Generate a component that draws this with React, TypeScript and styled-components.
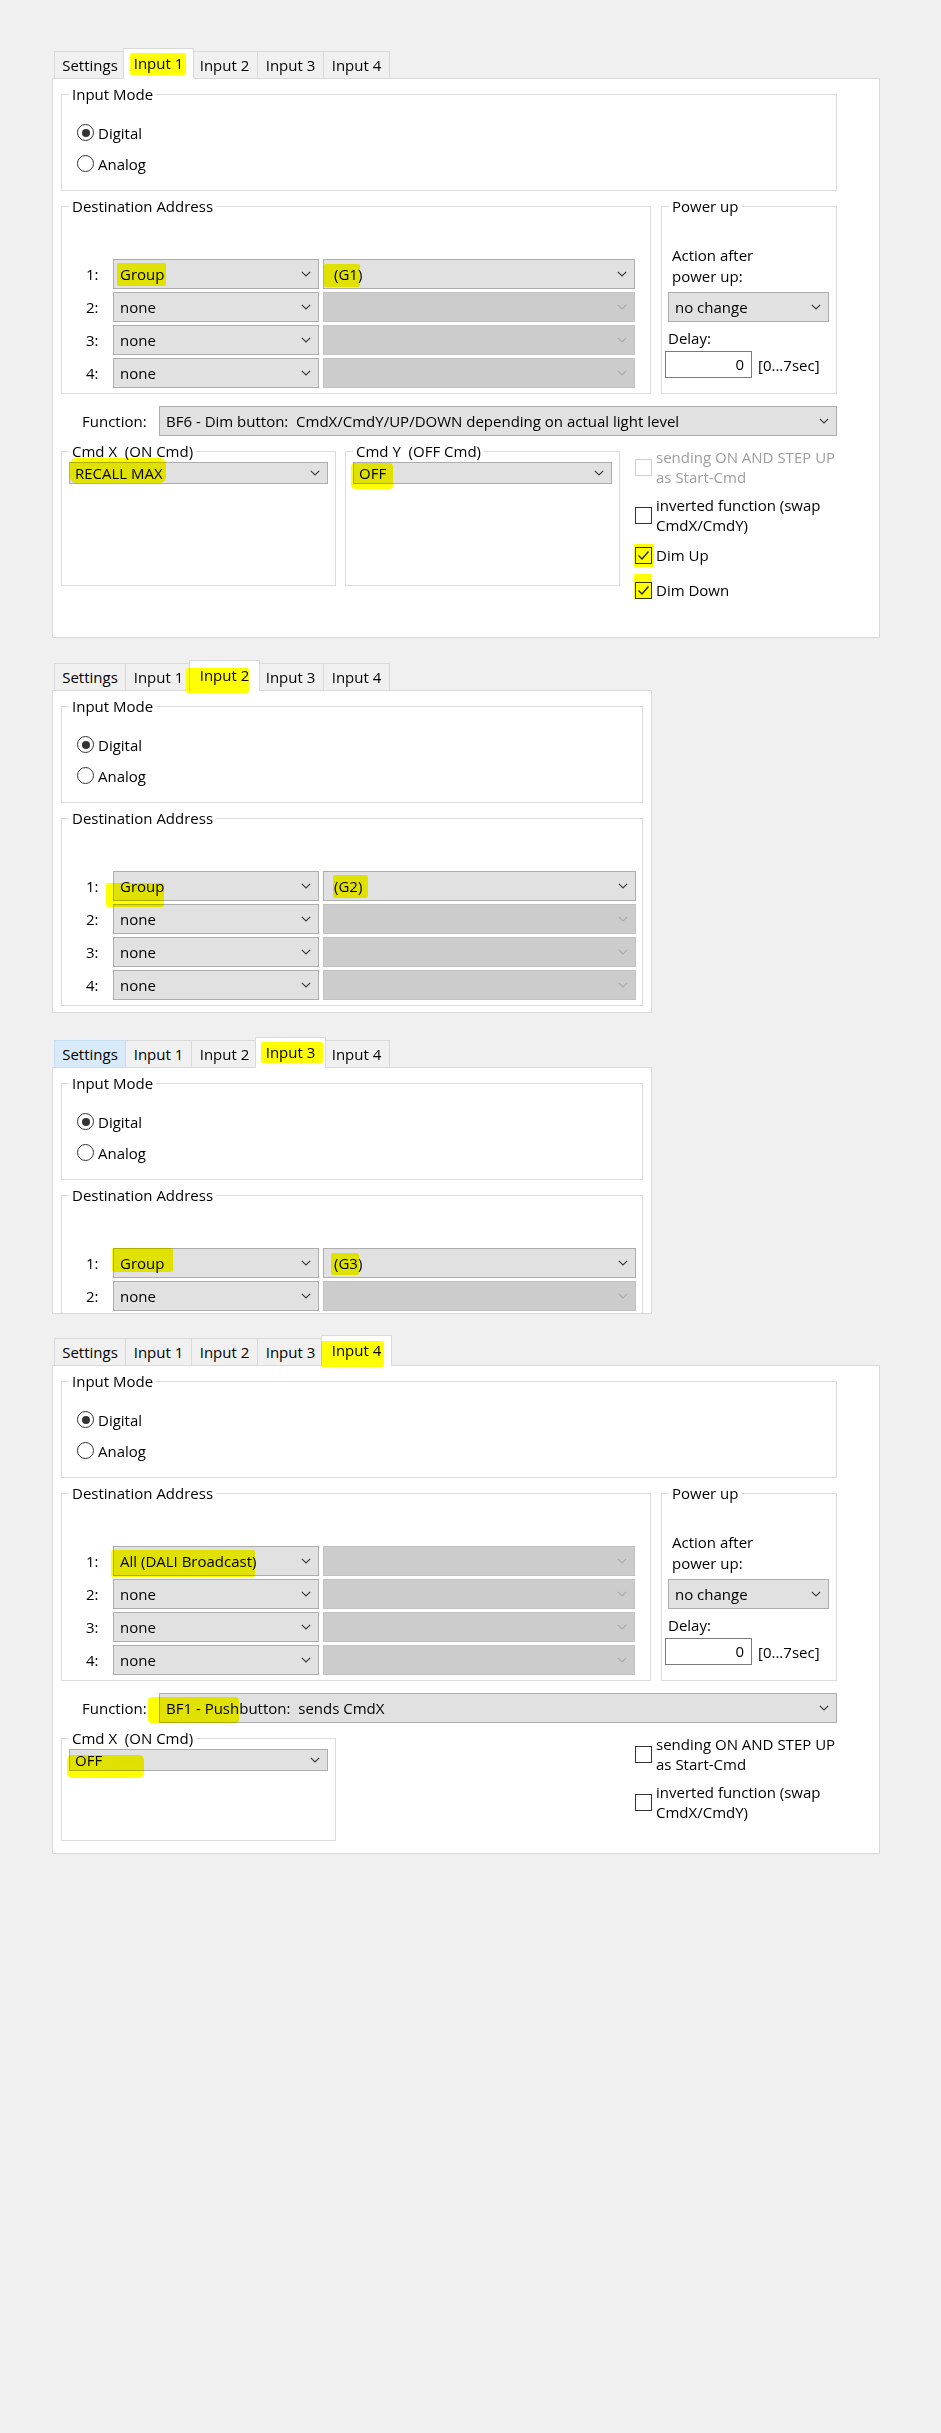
import { createGlobalStyle, styled } from "styled-components";
import type { ReactNode } from "react";

type Box = { t: number; r: number; b: number; l: number; rad?: number };

const GlobalStyle = createGlobalStyle`
  html, body {
    margin: 0;
    padding: 0;
    background: #f0f0f0;
  }
  body {
    font-family: "Open Sans", "Noto Sans", "Liberation Sans", sans-serif;
    font-size: 15px;
    color: #000;
  }
  #root {
    min-height: 2433px;
  }
`;

const Page = styled.main`
  display: flex;
  flex-direction: column;
  align-items: flex-start;
  padding: 48px 0 0 52px;
`;

const Shot = styled.section<{ $after: number }>`
  display: flex;
  flex-direction: column;
  margin-bottom: ${(p) => p.$after}px;
`;

const TabStrip = styled.div`
  display: flex;
  align-items: flex-end;
  height: 30px;
  padding-left: 2px;
`;

const Tab = styled.div<{ $w: number; $active?: boolean; $hover?: boolean }>`
  position: relative;
  box-sizing: border-box;
  display: flex;
  align-items: center;
  justify-content: center;
  width: ${(p) => p.$w + (p.$active ? 4 : 0)}px;
  height: ${(p) => (p.$active ? 31 : 27)}px;
  margin: 0 ${(p) => (p.$active ? -2 : 0)}px ${(p) => (p.$active ? -1 : 0)}px
    ${(p) => (p.$active ? -3 : -1)}px;
  padding-bottom: ${(p) => (p.$active ? 3 : 0)}px;
  border: 1px solid ${(p) => (p.$hover ? "#c4ddf3" : "#d9d9d9")};
  border-bottom: none;
  background: ${(p) => (p.$active ? "#fff" : p.$hover ? "#d8eaf9" : "#f0f0f0")};
  z-index: ${(p) => (p.$active ? 2 : p.$hover ? 1 : 0)};
  line-height: 20px;
  &:first-child {
    margin-left: 0;
  }
`;

const Panel = styled.div<{ $w: number; $h: number }>`
  box-sizing: border-box;
  width: ${(p) => p.$w}px;
  height: ${(p) => p.$h}px;
  border: 1px solid #d9d9d9;
  background: #fff;
  overflow: hidden;
  padding: 5px 0 0 8px;
`;

const Body = styled.div<{ $w: number }>`
  width: ${(p) => p.$w}px;
  display: flex;
  flex-direction: column;
`;

const Group = styled.fieldset<{ $w?: number; $h?: number; $mt?: number }>`
  box-sizing: border-box;
  margin: ${(p) => p.$mt ?? 0}px 0 0 0;
  padding: 0;
  min-width: 0;
  width: ${(p) => (p.$w ? `${p.$w}px` : "auto")};
  ${(p) => (p.$h ? `height: ${p.$h}px;` : "")}
  border: 1px solid #dcdcdc;
`;

const Legend = styled.legend`
  margin-left: 7px;
  padding: 0 3px;
  line-height: 20px;
  white-space: pre;
`;

const Stack = styled.div<{ $pt: number; $pb?: number; $pl?: number; $pr?: number; $gap?: number }>`
  display: flex;
  flex-direction: column;
  gap: ${(p) => p.$gap ?? 0}px;
  padding: ${(p) => p.$pt}px ${(p) => p.$pr ?? 0}px ${(p) => p.$pb ?? 0}px ${(p) => p.$pl ?? 0}px;
`;

const Mark = styled.span<{ $t: number; $r: number; $b: number; $l: number; $rad?: number }>`
  position: relative;
  display: inline-block;
  line-height: 20px;
  &::after {
    content: "";
    position: absolute;
    top: ${(p) => -p.$t}px;
    right: ${(p) => -p.$r}px;
    bottom: ${(p) => -p.$b}px;
    left: ${(p) => -p.$l}px;
    background: #ffff00;
    mix-blend-mode: multiply;
    border-radius: ${(p) => p.$rad ?? 2}px;
    pointer-events: none;
  }
`;

const RadioRow = styled.div`
  display: flex;
  align-items: center;
  gap: 4px;
  height: 31px;
  line-height: 20px;
`;

const Radio = styled.span<{ $on?: boolean }>`
  box-sizing: border-box;
  width: 17px;
  height: 17px;
  border-radius: 50%;
  border: 1px solid #333;
  background: #fff;
  display: flex;
  align-items: center;
  justify-content: center;
  &::after {
    content: "";
    width: 8px;
    height: 8px;
    border-radius: 50%;
    background: ${(p) => (p.$on ? "#333" : "transparent")};
  }
`;

const AddrRow = styled.div`
  display: flex;
  align-items: center;
`;

const RowLabel = styled.span`
  flex: none;
  width: 27px;
  line-height: 20px;
`;

const Combo = styled.div<{ $w?: number; $off?: boolean; $pl?: number; $ml?: number; $mt?: number }>`
  box-sizing: border-box;
  display: flex;
  align-items: center;
  height: 30px;
  ${(p) => (p.$w ? `width: ${p.$w}px; flex: none;` : "flex: 1; min-width: 0;")}
  margin: ${(p) => p.$mt ?? 0}px 0 0 ${(p) => p.$ml ?? 0}px;
  padding: 0 7px 0 ${(p) => p.$pl ?? 6}px;
  border: 1px solid ${(p) => (p.$off ? "#c2c2c2" : "#adadad")};
  background: ${(p) => (p.$off ? "#cccccc" : "#e1e1e1")};
  color: #000;
`;

const Value = styled.span`
  flex: 1;
  min-width: 0;
  white-space: pre;
  line-height: 20px;
`;

const TopRow = styled.div`
  display: flex;
  gap: 10px;
  margin-top: 5px;
`;

const PowerText = styled.div`
  padding-left: 4px;
  line-height: 21px;
`;

const DelayLabel = styled.div`
  margin-top: 6px;
  line-height: 20px;
`;

const DelayRow = styled.div`
  display: flex;
  align-items: center;
  margin: 3px 0 0 -3px;
`;

const DelayInput = styled.div`
  box-sizing: border-box;
  width: 87px;
  height: 27px;
  border: 1px solid #7a7a7a;
  background: #fff;
  padding-right: 7px;
  text-align: right;
  line-height: 25px;
`;

const Range = styled.span`
  margin-left: 6px;
  line-height: 20px;
`;

const FunctionRow = styled.div`
  display: flex;
  align-items: center;
  margin-top: 12px;
`;

const FnLabel = styled.span`
  flex: none;
  width: 77px;
  padding-left: 21px;
  line-height: 20px;
`;

const CmdRow = styled.div`
  display: grid;
  grid-template-columns: 275px 275px 1fr;
  column-gap: 9px;
  align-items: start;
  margin-top: 5px;
`;

const Checks = styled.div`
  grid-column: 3;
  display: flex;
  flex-direction: column;
  margin: 6px 0 0 6px;
`;

const CheckItem = styled.div<{ $mt?: number; $off?: boolean }>`
  display: flex;
  align-items: center;
  margin-top: ${(p) => p.$mt ?? 0}px;
  color: ${(p) => (p.$off ? "#9d9d9d" : "#000")};
`;

const CheckBox = styled.span<{ $off?: boolean }>`
  box-sizing: border-box;
  flex: none;
  display: flex;
  width: 17px;
  height: 17px;
  border: 1px solid ${(p) => (p.$off ? "#cfcfcf" : "#333")};
  background: #fff;
`;

const CheckText = styled.span`
  margin-left: 4px;
  line-height: 20px;
  white-space: nowrap;
`;

const TAB_NAMES = ["Settings", "Input 1", "Input 2", "Input 3", "Input 4"];

function Marked({ m, children }: { m?: Box; children: ReactNode }) {
  if (!m) return <>{children}</>;
  return (
    <Mark $t={m.t} $r={m.r} $b={m.b} $l={m.l} $rad={m.rad}>
      {children}
    </Mark>
  );
}

function Tabs({ active, hover, mark }: { active: number; hover?: number; mark: Box }) {
  return (
    <TabStrip>
      {TAB_NAMES.map((name, i) => (
        <Tab key={name} $w={i === 0 ? 72 : 67} $active={i === active} $hover={i === hover}>
          {i === active ? <Marked m={mark}>{name}</Marked> : name}
        </Tab>
      ))}
    </TabStrip>
  );
}

function Chevron({ off }: { off?: boolean }) {
  return (
    <svg width="10" height="6" viewBox="0 0 10 6" fill="none">
      <polyline
        points="0.8,0.8 5,5 9.2,0.8"
        stroke={off ? "#a9a9a9" : "#3c3c3c"}
        strokeWidth="1.2"
      />
    </svg>
  );
}

function Select({
  children,
  w,
  off,
  pl,
  ml,
  mt,
}: {
  children?: ReactNode;
  w?: number;
  off?: boolean;
  pl?: number;
  ml?: number;
  mt?: number;
}) {
  return (
    <Combo $w={w} $off={off} $pl={pl} $ml={ml} $mt={mt}>
      <Value>{children}</Value>
      <Chevron off={off} />
    </Combo>
  );
}

function Tick() {
  return (
    <svg width="15" height="15" viewBox="0 0 15 15" fill="none">
      <polyline points="2.5,7.5 6,11 12.5,3.5" stroke="#222" strokeWidth="1.4" />
    </svg>
  );
}

function Check({
  lines,
  checked,
  off,
  mt,
  mark,
}: {
  lines: string[];
  checked?: boolean;
  off?: boolean;
  mt?: number;
  mark?: Box;
}) {
  const box = <CheckBox $off={off}>{checked ? <Tick /> : null}</CheckBox>;
  return (
    <CheckItem $mt={mt} $off={off}>
      {mark ? (
        <Mark $t={mark.t} $r={mark.r} $b={mark.b} $l={mark.l} $rad={1}>
          {box}
        </Mark>
      ) : (
        box
      )}
      <CheckText>
        {lines.map((l, i) => (
          <div key={i}>{l}</div>
        ))}
      </CheckText>
    </CheckItem>
  );
}

function InputMode({ w }: { w: number }) {
  return (
    <Group $w={w}>
      <Legend>Input Mode</Legend>
      <Stack $pt={13} $pb={11} $pl={15}>
        <RadioRow>
          <Radio $on />
          Digital
        </RadioRow>
        <RadioRow>
          <Radio />
          Analog
        </RadioRow>
      </Stack>
    </Group>
  );
}

type Addr = { sel: ReactNode; addr?: ReactNode };

function Destination({ w, pr, rows }: { w: number; pr: number; rows: Addr[] }) {
  return (
    <Group $w={w}>
      <Legend>Destination Address</Legend>
      <Stack $pt={43} $pb={5} $pl={24} $pr={pr} $gap={3}>
        {rows.map((r, i) => (
          <AddrRow key={i}>
            <RowLabel>{i + 1}:</RowLabel>
            <Select w={206}>{r.sel}</Select>
            <Select off={r.addr === undefined} pl={10} ml={4}>
              {r.addr}
            </Select>
          </AddrRow>
        ))}
      </Stack>
    </Group>
  );
}

function PowerUp() {
  return (
    <Group $w={176}>
      <Legend>Power up</Legend>
      <Stack $pt={29} $pl={6}>
        <PowerText>
          Action after
          <br />
          power up:
        </PowerText>
        <Select w={161} mt={5}>
          no change
        </Select>
        <DelayLabel>Delay:</DelayLabel>
        <DelayRow>
          <DelayInput>0</DelayInput>
          <Range>[0...7sec]</Range>
        </DelayRow>
      </Stack>
    </Group>
  );
}

function CmdBox({ title, h, children }: { title: string; h: number; children: ReactNode }) {
  return (
    <Group $h={h}>
      <Legend>{title}</Legend>
      <Stack $pt={1} $pl={7} $pr={7}>
        {children}
      </Stack>
    </Group>
  );
}

const none: Addr = { sel: "none" };

export default function App() {
  return (
    <>
      <GlobalStyle />
      <Page>
        <Shot $after={22}>
          <Tabs active={1} mark={{ t: 0, r: 3, b: 2, l: 4 }} />
          <Panel $w={828} $h={560}>
            <Body $w={776}>
              <InputMode w={776} />
              <TopRow>
                <Destination
                  w={590}
                  pr={15}
                  rows={[
                    {
                      sel: <Mark $t={1} $r={2} $b={2} $l={3}>Group</Mark>,
                      addr: <Mark $t={0} $r={-2} $b={3} $l={10}>(G1)</Mark>,
                    },
                    none,
                    none,
                    none,
                  ]}
                />
                <PowerUp />
              </TopRow>
              <FunctionRow>
                <FnLabel>Function:</FnLabel>
                <Select>BF6 - Dim button:  CmdX/CmdY/UP/DOWN depending on actual light level</Select>
              </FunctionRow>
              <CmdRow>
                <CmdBox title="Cmd X  (ON Cmd)" h={145}>
                  <Select pl={5}>
                    <Mark $t={5} $r={3} $b={0} $l={5} $rad={6}>
                      RECALL MAX
                    </Mark>
                  </Select>
                </CmdBox>
                <CmdBox title="Cmd Y  (OFF Cmd)" h={145}>
                  <Select pl={5}>
                    <Mark $t={0} $r={7} $b={6} $l={8} $rad={4}>
                      OFF
                    </Mark>
                  </Select>
                </CmdBox>
                <Checks>
                  <Check off lines={["sending ON AND STEP UP", "as Start-Cmd"]} />
                  <Check mt={8} lines={["inverted function (swap", "CmdX/CmdY)"]} />
                  <Check mt={10} checked lines={["Dim Up"]} mark={{ t: 3, r: 2, b: 3, l: 1 }} />
                  <Check mt={15} checked lines={["Dim Down"]} mark={{ t: 8, r: 0, b: 0, l: 1 }} />
                </Checks>
              </CmdRow>
            </Body>
          </Panel>
        </Shot>

        <Shot $after={24}>
          <Tabs active={2} mark={{ t: -3, r: 0, b: 8, l: 14 }} />
          <Panel $w={600} $h={323}>
            <Body $w={582}>
              <InputMode w={582} />
              <TopRow>
                <Destination
                  w={582}
                  pr={6}
                  rows={[
                    {
                      sel: <Mark $t={-7} $r={0} $b={11} $l={14}>Group</Mark>,
                      addr: <Mark $t={1} $r={6} $b={2} $l={1}>(G2)</Mark>,
                    },
                    none,
                    none,
                    none,
                  ]}
                />
              </TopRow>
            </Body>
          </Panel>
        </Shot>

        <Shot $after={21}>
          <Tabs active={3} hover={0} mark={{ t: 0, r: 8, b: 1, l: 5 }} />
          <Panel $w={600} $h={247}>
            <Body $w={582}>
              <InputMode w={582} />
              <TopRow>
                <Destination
                  w={582}
                  pr={6}
                  rows={[
                    {
                      sel: <Mark $t={5} $r={9} $b={-1} $l={8}>Group</Mark>,
                      addr: <Mark $t={0} $r={-3} $b={2} $l={3}>(G3)</Mark>,
                    },
                    none,
                    none,
                    none,
                  ]}
                />
              </TopRow>
            </Body>
          </Panel>
        </Shot>

        <Shot $after={0}>
          <Tabs active={4} mark={{ t: -1, r: 3, b: 7, l: 11 }} />
          <Panel $w={828} $h={489}>
            <Body $w={776}>
              <InputMode w={776} />
              <TopRow>
                <Destination
                  w={590}
                  pr={15}
                  rows={[
                    { sel: <Mark $t={1} $r={-1} $b={6} $l={9}>All (DALI Broadcast)</Mark> },
                    none,
                    none,
                    none,
                  ]}
                />
                <PowerUp />
              </TopRow>
              <FunctionRow>
                <FnLabel>Function:</FnLabel>
                <Select>
                  <Mark $t={1} $r={0} $b={5} $l={18} $rad={4}>
                    BF1 - Push
                  </Mark>
                  button:  sends CmdX
                </Select>
              </FunctionRow>
              <CmdRow>
                <CmdBox title="Cmd X  (ON Cmd)" h={113}>
                  <Select pl={5}>
                    <Mark $t={-5} $r={42} $b={8} $l={8} $rad={5}>
                      OFF
                    </Mark>
                  </Select>
                </CmdBox>
                <Checks>
                  <Check lines={["sending ON AND STEP UP", "as Start-Cmd"]} />
                  <Check mt={8} lines={["inverted function (swap", "CmdX/CmdY)"]} />
                </Checks>
              </CmdRow>
            </Body>
          </Panel>
        </Shot>
      </Page>
    </>
  );
}
